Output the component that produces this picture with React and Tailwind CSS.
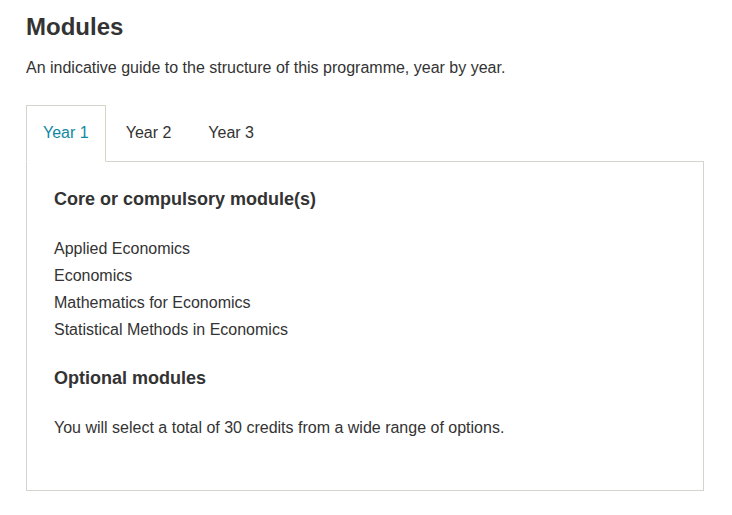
import React, { useState } from "react";

const years = {
  "Year 1": {
    core: [
      "Applied Economics",
      "Economics",
      "Mathematics for Economics",
      "Statistical Methods in Economics",
    ],
    optional: "You will select a total of 30 credits from a wide range of options.",
  },
  "Year 2": {
    core: ["Intermediate Microeconomics", "Intermediate Macroeconomics", "Econometrics"],
    optional: "You will select a total of 60 credits from a wide range of options.",
  },
  "Year 3": {
    core: ["Advanced Economic Theory"],
    optional: "You will select a total of 90 credits from a wide range of options.",
  },
};

const App = () => {
  const [activeTab, setActiveTab] = useState("Year 1"); // pestaña activa
  const current = years[activeTab];

  return (
    <div
      className="min-h-screen bg-white px-[26px] text-[#333333]"
      style={{ fontFamily: '"Liberation Sans", Arial, sans-serif' }}
    >
      <h1 className="pt-3 text-[24px] font-bold leading-[30px]">Modules</h1>
      <p className="mt-[14px] text-[16px] leading-6">
        An indicative guide to the structure of this programme, year by year.
      </p>

      <div className="mt-[25px] w-[678px]">
        <div className="flex gap-[3px]">
          {Object.keys(years).map((year) => (
            <button
              key={year}
              onClick={() => setActiveTab(year)}
              className={`-mb-px border px-4 pt-[15px] pb-4 text-[16px] leading-6 ${
                activeTab === year
                  ? "border-[#d6d5cc] border-b-white bg-white text-[#1089a0]"
                  : "border-transparent text-[#333333]"
              }`}
            >
              {year}
            </button>
          ))}
        </div>
        <div className="border border-[#d6d5cc] px-[27px] pt-6 pb-[49px]">
          <h2 className="text-[18px] font-bold leading-[27px]">Core or compulsory module(s)</h2>
          <ul className="mt-[22px] text-[16px] leading-[27px]">
            {current.core.map((mod) => (
              <li key={mod}>{mod}</li>
            ))}
          </ul>
          <h2 className="mt-[22px] text-[18px] font-bold leading-[27px]">Optional modules</h2>
          <p className="mt-[22px] text-[16px] leading-[27px]">{current.optional}</p>
        </div>
      </div>
    </div>
  );
};

export default App;
